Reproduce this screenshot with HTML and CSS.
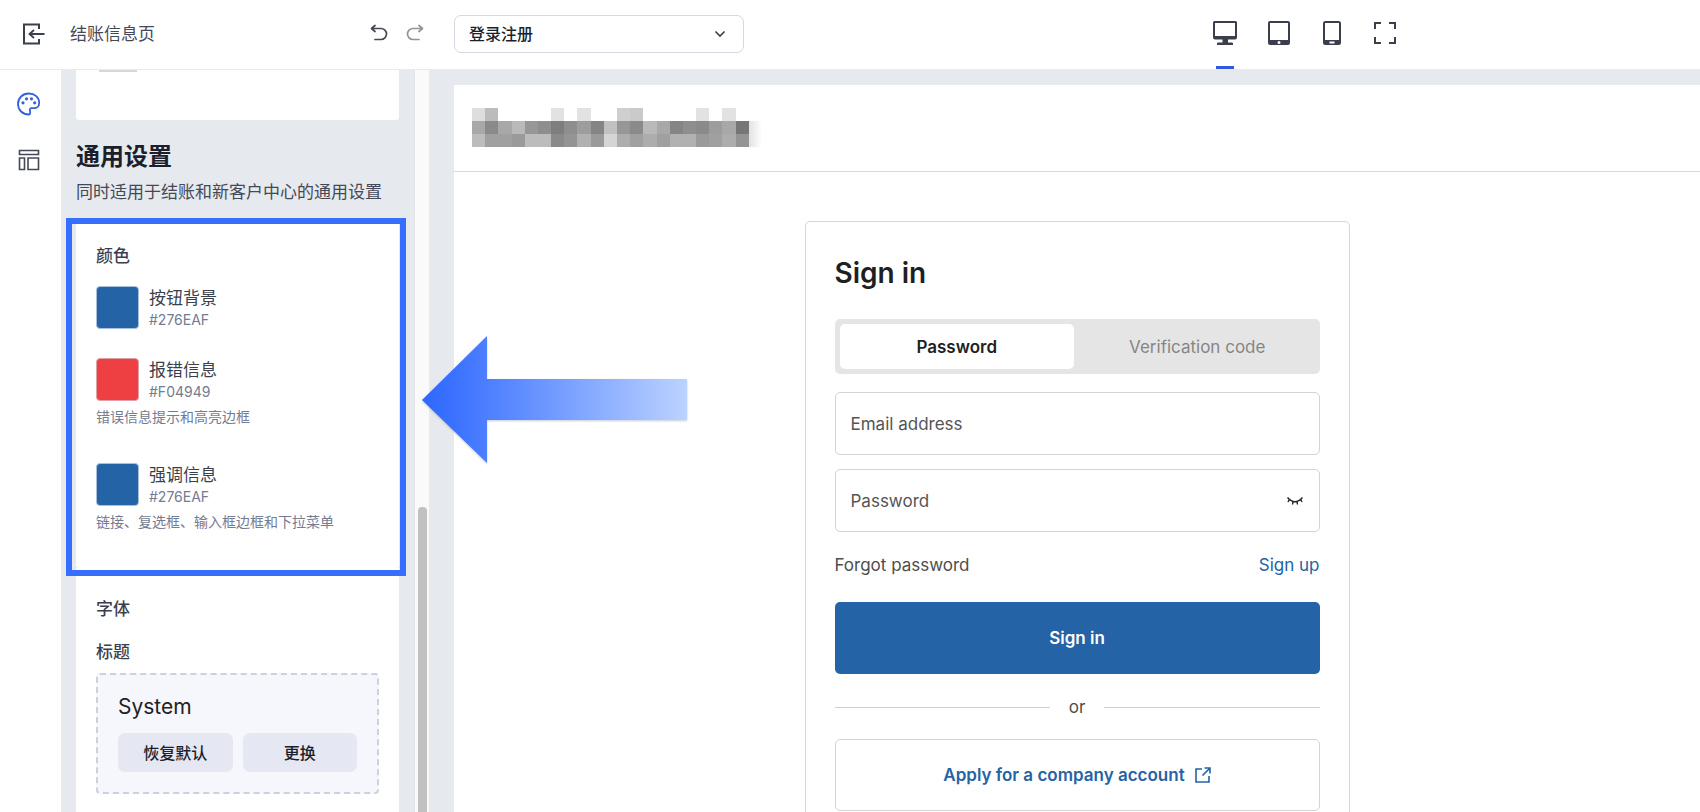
FILE: index.html
```
<!DOCTYPE html>
<html lang="zh-CN">
<head>
<meta charset="utf-8">
<title>结账信息页</title>
<link rel="stylesheet" href="styles.css">
</head>
<body>
<div class="app">
  <header class="topbar">
    <div class="topbar-left">
      <button class="icon-btn" aria-label="退出"><svg width="24" height="24" viewBox="0 0 24 24" fill="none" stroke="#3b3f4d" stroke-width="2"><path d="M17 7V2.500H2V21.500H17V17"/><path d="M22.500 12H8M12 8l-4.500 4 4.500 4" stroke-width="1.800"/></svg></button>
      <h1 class="page-name">结账信息页</h1>
      <div class="history">
        <button class="icon-btn" aria-label="撤销"><svg width="18" height="18" viewBox="0 0 18 18" fill="none" stroke="#454957" stroke-width="1.700" stroke-linecap="round" stroke-linejoin="round"><path d="M5 1.500L1.500 4.500 5 7.500M2 4.500H11a5.500 5.500 0 0 1 0 11H5"/></svg></button>
        <button class="icon-btn" aria-label="重做"><svg width="18" height="18" viewBox="0 0 18 18" fill="none" stroke="#92949c" stroke-width="1.700" stroke-linecap="round" stroke-linejoin="round"><path d="M13 1.500l3.500 3L13 7.500M16 4.500H7a5.500 5.500 0 0 0 0 11h6"/></svg></button>
      </div>
    </div>
    <div class="page-select">
      <select aria-label="页面"><option>登录注册</option></select>
      <svg class="chevron" width="12" height="8" viewBox="0 0 12 8" fill="none" stroke="#3b3f4d" stroke-width="1.600"><path d="M1.500 1.500L6 6l4.500-4.500"/></svg>
    </div>
    <nav class="devices" aria-label="预览设备">
      <button class="device active" aria-label="桌面"><svg width="26" height="26" viewBox="0 0 26 26" fill="#3b3f4d"><path fill-rule="evenodd" d="M2.500 1h21A1.500 1.500 0 0 1 25 2.500v15a2 2 0 0 1-2 2h-7v3h4a1 1 0 0 1 1 1V25H5v-1.500a1 1 0 0 1 1-1h4.500v-3H3a2 2 0 0 1-2-2v-15A1.500 1.500 0 0 1 2.500 1zM3 3v13h20V3z"/></svg></button>
      <button class="device" aria-label="平板"><svg width="22" height="26" viewBox="0 0 22 26" fill="#3b3f4d"><path fill-rule="evenodd" d="M2 1h18a2 2 0 0 1 2 2v20a2 2 0 0 1-2 2H2a2 2 0 0 1-2-2V3a2 2 0 0 1 2-2zM2 3v17h18V3zM9.500 22.500a1.500 1.500 0 1 0 3 0 1.500 1.500 0 1 0-3 0z"/></svg></button>
      <button class="device" aria-label="手机"><svg width="18" height="26" viewBox="0 0 18 26" fill="#3b3f4d"><path fill-rule="evenodd" d="M2.500 1h13A2.500 2.500 0 0 1 18 3.500v19a2.500 2.500 0 0 1-2.500 2.500h-13A2.500 2.500 0 0 1 0 22.500v-19A2.500 2.500 0 0 1 2.500 1zM2 3v17h14V3zM6.500 21.500v2h5v-2z"/></svg></button>
      <button class="device" aria-label="全屏"><svg width="22" height="26" viewBox="0 0 22 26" fill="none" stroke="#3b3f4d" stroke-width="2"><path d="M1 9V3H7M15 3H21V9M21 17V23H15M7 23H1V17"/></svg></button>
    </nav>
  </header>

  <div class="body">
    <nav class="rail" aria-label="编辑器">
      <button class="icon-btn" aria-label="主题"><svg width="24" height="24" viewBox="0 0 24 24" fill="none" stroke="#3560dc" stroke-width="1.800"><path d="M12 22.500C5.500 22.500 1 18 1 12S5.700 1.500 11.700 1.500 22.200 5.500 22.200 11c0 3.500-2.600 5.200-5 5.200h-2.600c-1.600 0-2 1-1.700 2.300.4 1.600.6 4-.9 4z"/><g fill="#3560dc" stroke="none"><circle cx="6" cy="10.800" r="1.600"/><circle cx="9.500" cy="6.800" r="1.600"/><circle cx="14.500" cy="6.800" r="1.600"/><circle cx="17.700" cy="10.800" r="1.600"/></g></svg></button>
      <button class="icon-btn" aria-label="布局"><svg width="22" height="22" viewBox="0 0 22 22" fill="none" stroke="#454957" stroke-width="1.600"><path d="M1.500 1.500h19v4h-19zM1.500 9h5v11.500h-5zM10 9h10.500v11.500H10z"/></svg></button>
    </nav>

    <aside class="sidebar">
      <div class="card card-tail"><span class="tail-line"></span></div>
      <h2 class="group-title">通用设置</h2>
      <p class="group-desc">同时适用于结账和新客户中心的通用设置</p>

      <section class="card colors">
        <h3 class="card-title">颜色</h3>
        <div class="color-item">
          <button class="swatch primary" aria-label="按钮背景"></button>
          <div><div class="color-name">按钮背景</div><div class="color-hex">#276EAF</div></div>
        </div>
        <div class="color-item">
          <button class="swatch error" aria-label="报错信息"></button>
          <div><div class="color-name">报错信息</div><div class="color-hex">#F04949</div></div>
          <p class="hint">错误信息提示和高亮边框</p>
        </div>
        <div class="color-item">
          <button class="swatch primary" aria-label="强调信息"></button>
          <div><div class="color-name">强调信息</div><div class="color-hex">#276EAF</div></div>
          <p class="hint">链接、复选框、输入框边框和下拉菜单</p>
        </div>
        <div class="highlight"></div>
      </section>

      <section class="card fonts">
        <h3 class="card-title">字体</h3>
        <h4 class="card-title">标题</h4>
        <div class="font-box">
          <div class="font-name">System</div>
          <div class="font-actions">
            <button class="soft-btn">恢复默认</button>
            <button class="soft-btn">更换</button>
          </div>
        </div>
      </section>
    </aside>
    <div class="scrollbar"><div class="thumb"></div></div>

    <main class="workspace">
      <div class="preview">
        <div class="store-header">
          <svg width="290" height="39" viewBox="0 0 22 3" preserveAspectRatio="none" shape-rendering="crispEdges" aria-hidden="true">
            <defs><linearGradient id="fade"><stop offset="0" stop-color="#e2e2e2"/><stop offset="1" stop-color="#fff"/></linearGradient></defs>
            <g>
              <path fill="#dedede" d="M0 0h1v1H0z"/><path fill="#bcbcbc" d="M1 0h1v1H1z"/><path fill="#e2e2e2" d="M6 0h1v1H6zM8 0h1v1H8zM17 0h1v1h-1zM19 0h1v1h-1z"/><path fill="#cfcfcf" d="M11 0h1v1h-1z"/><path fill="#cacaca" d="M12 0h1v1h-1z"/>
            </g>
            <g>
              <path fill="#a8a8a8" d="M0 1h1v1H0zM2 1h1v1H2zM14 1h1v1h-1zM19 1h1v1h-1z"/><path fill="#8a8a8a" d="M1 1h1v1H1zM12 1h1v1h-1zM17 1h1v1h-1z"/><path fill="#b9b9b9" d="M3 1h1v1H3zM13 1h1v1h-1z"/><path fill="#979797" d="M4 1h1v1H4zM11 1h1v1h-1z"/><path fill="#8e8e8e" d="M5 1h1v1H5zM7 1h1v1H7zM16 1h1v1h-1z"/><path fill="#7e7e7e" d="M6 1h1v1H6z"/><path fill="#9d9d9d" d="M8 1h1v1H8zM18 1h1v1h-1z"/><path fill="#858585" d="M9 1h1v1H9zM15 1h1v1h-1z"/><path fill="#c1c1c1" d="M10 1h1v1h-1z"/><path fill="#767676" d="M20 1h1v1h-1z"/>
            </g>
            <g>
              <path fill="#bcbcbc" d="M0 2h1v1H0zM4 2h2v1H4z"/><path fill="#a0a0a0" d="M1 2h2v1H1zM12 2h1v1h-1zM14 2h1v1h-1zM18 2h1v1h-1z"/><path fill="#9a9a9a" d="M3 2h1v1H3zM9 2h1v1H9zM17 2h1v1h-1z"/><path fill="#8a8a8a" d="M6 2h1v1H6z"/><path fill="#949494" d="M7 2h1v1H7zM20 2h1v1h-1z"/><path fill="#b1b1b1" d="M8 2h1v1H8zM15 2h2v1h-2z"/><path fill="#d5d5d5" d="M10 2h1v1h-1z"/><path fill="#adadad" d="M11 2h1v1h-1zM13 2h1v1h-1zM19 2h1v1h-1z"/>
            </g>
            <path fill="url(#fade)" d="M21 1h1v2h-1z"/>
          </svg>
        </div>
        <form class="login">
          <h2 class="login-title">Sign in</h2>
          <div class="tabs">
            <button type="button" class="tab selected">Password</button>
            <button type="button" class="tab">Verification code</button>
          </div>
          <div class="field"><input type="email" aria-label="Email address" placeholder="Email address"></div>
          <div class="field">
            <input type="password" aria-label="Password" placeholder="Password">
            <button type="button" class="icon-btn" aria-label="Show password"><svg width="16" height="10" viewBox="0 0 16 10" fill="none" stroke="#222" stroke-width="1.400"><path d="M.5 1.500Q8 10 15.500 1.500M2.300 3.500L1 6M13.700 3.500L15 6M6 5.600L5.500 8.500M10 5.600l.5 2.900"/></svg></button>
          </div>
          <div class="links"><a href="#forgot">Forgot password</a><a class="accent" href="#signup">Sign up</a></div>
          <button type="submit" class="submit">Sign in</button>
          <div class="divider"><span>or</span></div>
          <a class="apply" href="#company">Apply for a company account
            <svg width="16" height="16" viewBox="0 0 16 16" fill="none" stroke="#2463a5" stroke-width="1.600"><path d="M7 2H1V15H14V9M9.500 1H15V6.500M15 1L7.500 8.500"/></svg></a>
        </form>
      </div>
    </main>

    <svg class="arrow" width="268" height="132" viewBox="0 0 268 132" aria-hidden="true">
      <defs><linearGradient id="arrowFill"><stop offset="0" stop-color="#2f68ff"/><stop offset=".12" stop-color="#3a71ff"/><stop offset="1" stop-color="#bcd2ff"/></linearGradient></defs>
      <path class="arrow-shape" d="M1 66L66 2V45H266V86H66V129z" fill="url(#arrowFill)"/>
    </svg>
  </div>
</div>
</body>
</html>
```
FILE: styles.css
```
* { box-sizing: border-box; }
body, h1, h2, h3, h4, p { margin: 0; }
body {
  font-family: Inter, "Noto Sans CJK SC", sans-serif;
  font-size: 17px;
  line-height: 24px;
  color: #3b3f4d;
  background: #fff;
}
button, input, select { font: inherit; color: inherit; }
button { border: 0; padding: 0; background: none; cursor: pointer; }
a { color: inherit; text-decoration: none; }
svg { display: block; flex: none; }
.icon-btn { display: flex; }

.app { display: flex; flex-direction: column; height: 100vh; overflow: hidden; }

/* Top bar */
.topbar { display: flex; align-items: center; flex: none; height: 70px; padding-bottom: 2px; border-bottom: 1px solid #e6e9ee; }
.topbar-left { display: flex; align-items: center; width: 454px; padding: 0 30px 0 22px; }
.page-name { margin-left: 24px; font-size: 17px; font-weight: 400; color: #454957; }
.history { display: flex; gap: 18px; margin-left: auto; padding-bottom: 2px; }
.page-select { position: relative; width: 290px; }
.page-select select {
  display: block; width: 100%; height: 38px; padding: 0 14px; appearance: none;
  border: 1px solid #d6d8e2; border-radius: 7px; background: #fff;
  font-size: 16px; font-weight: 500; color: #1c1f2b;
}
.chevron { position: absolute; right: 18px; top: 15px; pointer-events: none; }
.devices { display: flex; align-self: stretch; gap: 29px; margin: 0 303px -3px auto; }
.device { position: relative; display: flex; align-items: center; justify-content: center; min-width: 24px; padding-bottom: 4px; }
.device.active::after { content: ""; position: absolute; left: 4px; right: 4px; bottom: 1px; height: 3px; background: #2f5be3; }

/* Body columns */
.body { position: relative; display: flex; flex: 1; min-height: 0; }
.rail { display: flex; flex-direction: column; align-items: center; gap: 33px; width: 61px; padding: 22px 4px 0 0; flex: none; }
.sidebar { width: 353px; flex: none; padding: 0 15px; overflow: hidden; background: #e6e9ee; }
.scrollbar { width: 15px; flex: none; padding: 437px 2px 0 3px; background: #fafafa; border-left: 1px solid #e3e4e8; }
.thumb { height: 100%; border-radius: 4px 4px 0 0; background: #c1c1c1; }

.card { padding: 0 20px; background: #fff; }
.card-tail { height: 50px; border-radius: 0 0 3px 3px; }
.tail-line { display: block; width: 38px; height: 2px; margin-left: 3px; background: #d6d8e0; }
.group-title { margin-top: 21px; font-size: 24px; line-height: 32px; font-weight: 600; color: #1c1f2b; }
.group-desc { margin-top: 7px; color: #454957; white-space: nowrap; }
.card-title { font-size: 17px; font-weight: 500; }

.colors { position: relative; margin-top: 16px; padding-top: 24px; padding-bottom: 29px; border-radius: 3px; }
.color-item { display: grid; grid-template-columns: 43px 1fr; column-gap: 10px; margin-top: 29px; }
.card-title + .color-item { margin-top: 18px; }
.swatch { width: 43px; height: 43px; border-radius: 4px; border: 1px solid #a9c0dc; }
.swatch.primary { background: #2463a5; }
.swatch.error { background: #ee4042; border-color: #e0a0a8; }
.color-name { line-height: 25px; }
.color-hex { font-size: 14px; line-height: 18px; color: #747b92; }
.hint { grid-column: 1 / -1; margin: 6px 0 7px; font-size: 14px; line-height: 20px; color: #747b92; }
.highlight { position: absolute; inset: -2px -7px -8px -10px; border: 6px solid #366eff; pointer-events: none; }

.fonts { padding-top: 29px; padding-bottom: 40px; }
.fonts .card-title + .card-title { margin-top: 19px; }
.font-box { margin-top: 9px; padding: 18px 20px 20px; border: 2px dashed #cdd1db; border-radius: 4px; background: #f6f7fc; }
.font-name { font-size: 21px; line-height: 28px; color: #222; }
.font-actions { display: grid; grid-template-columns: 1fr 1fr; gap: 10px; margin-top: 12px; }
.soft-btn { height: 39px; border-radius: 7px; background: #e5e7f2; font-size: 16px; font-weight: 500; color: #1c1f2b; }

/* Store preview */
.workspace { display: flex; flex: 1; min-width: 0; padding: 15px 0 0 25px; overflow: hidden; background: #e6e9ee; }
.preview { flex: 1; background: #fff; }
.store-header { display: flex; align-items: center; height: 87px; padding: 0 18px 2px; border-bottom: 1px solid #d9d9d9; }
.login { width: 545px; max-width: 100%; margin: 49px auto 0; padding: 33px 29px 40px; border: 1px solid #d6d6d6; border-radius: 5px; color: #4d4d4d; }
.login-title { font-size: 28px; line-height: 36px; font-weight: 600; color: #1f1f1f; }
.tabs { display: grid; grid-template-columns: 1fr 1fr; gap: 6px; height: 55px; margin-top: 28px; padding: 5px; border-radius: 5px; background: #e5e5e5; }
.tab { border-radius: 5px; color: #858585; }
.tab.selected { background: #fff; font-weight: 600; color: #1f1f1f; }
.field { display: flex; align-items: center; height: 63px; margin-top: 14px; padding: 0 16px 0 0; border: 1px solid #d4d4d4; border-radius: 5px; }
.tabs + .field { margin-top: 18px; }
.field input { flex: 1; min-width: 0; height: 100%; padding: 0 0 0 15px; border: 0; outline: 0; background: none; }
.field input::placeholder { color: #555; opacity: 1; }
.links { display: flex; justify-content: space-between; margin-top: 21px; }
.accent { color: #2463a5; }
.submit { display: block; width: 100%; height: 72px; margin-top: 25px; border-radius: 5px; background: #2463a5; font-weight: 600; color: #fff; }
.divider { display: flex; align-items: center; gap: 19px; margin-top: 21px; }
.divider::before, .divider::after { content: ""; flex: 1; height: 1px; background: #cfcfcf; }
.apply { display: flex; align-items: center; justify-content: center; gap: 10px; height: 72px; margin-top: 20px; border: 1px solid #d4d4d4; border-radius: 5px; font-weight: 600; color: #2463a5; }

.arrow { position: absolute; left: 421px; top: 264px; pointer-events: none; }
.arrow-shape { filter: drop-shadow(0 1px 1px rgba(60, 80, 130, .3)); }
```
